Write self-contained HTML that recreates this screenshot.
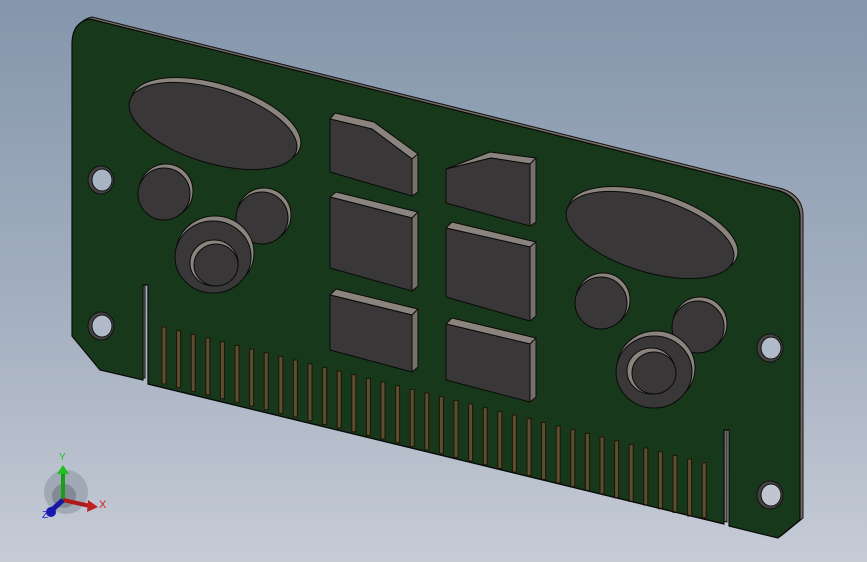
<!DOCTYPE html>
<html><head><meta charset="utf-8"><style>
html,body{margin:0;padding:0;width:867px;height:562px;overflow:hidden}
svg{display:block}
text{font-family:"Liberation Sans",sans-serif}
</style></head><body>
<svg width="867" height="562" viewBox="0 0 867 562" xmlns="http://www.w3.org/2000/svg">
<defs>
<linearGradient id="bg" x1="0" y1="0" x2="0" y2="1">
<stop offset="0" stop-color="#8496ac"/><stop offset="0.6" stop-color="#a7b2c2"/><stop offset="1" stop-color="#c6ccd6"/>
</linearGradient>
</defs>
<rect width="867" height="562" fill="url(#bg)"/>
<!-- board edge (thickness) -->
<path d="M92,17 L783,189 Q802,196 803,214 L803,518 L781,536 L732,524 L732,430 L727,430 L727,522 L150,382 L150,285 L145,285 L145,378 L103,368 L75,335 L75,40 Q76,20 92,17 Z" fill="#777068" stroke="#111" stroke-width="1"/>
<!-- board face -->
<path d="M90,19 L780,191 Q799,198 800,216 L800,520 L778,538 L729,526 L729,430 L724,430 L724,524 L148,384 L148,285 L143,285 L143,380 L100,370 L72,336 L72,42 Q73,22 90,19 Z" fill="#18381b" stroke="#0a0a0a" stroke-width="1.2"/>
<!-- teeth -->
<g fill="#5e4e30" stroke="#1a1408" stroke-width="1">
<script>/*placeholder*/</script>
<rect x="162" y="327" width="4" height="57"/><rect x="176.6" y="330.7" width="4" height="57"/><rect x="191.2" y="334.4" width="4" height="57"/><rect x="205.8" y="338" width="4" height="57"/><rect x="220.4" y="341.7" width="4" height="57"/><rect x="235" y="345.4" width="4" height="57"/><rect x="249.6" y="349" width="4" height="57"/><rect x="264.2" y="352.7" width="4" height="57"/><rect x="278.8" y="356.4" width="4" height="57"/><rect x="293.4" y="360" width="4" height="57"/><rect x="308" y="363.7" width="4" height="57"/><rect x="322.6" y="367.4" width="4" height="57"/><rect x="337.2" y="371" width="4" height="57"/><rect x="351.8" y="374.7" width="4" height="57"/><rect x="366.4" y="378.4" width="4" height="57"/><rect x="381" y="382" width="4" height="57"/><rect x="395.6" y="385.7" width="4" height="57"/><rect x="410.2" y="389.4" width="4" height="57"/><rect x="424.8" y="393" width="4" height="57"/><rect x="439.4" y="396.7" width="4" height="57"/><rect x="454" y="400.4" width="4" height="57"/><rect x="468.6" y="404" width="4" height="57"/><rect x="483.2" y="407.7" width="4" height="57"/><rect x="497.8" y="411.4" width="4" height="57"/><rect x="512.4" y="415" width="4" height="57"/><rect x="527" y="418.7" width="4" height="57"/><rect x="541.6" y="422.4" width="4" height="57"/><rect x="556.2" y="426" width="4" height="57"/><rect x="570.8" y="429.7" width="4" height="57"/><rect x="585.4" y="433.4" width="4" height="57"/><rect x="600" y="437" width="4" height="57"/><rect x="614.6" y="440.7" width="4" height="57"/><rect x="629.2" y="444.4" width="4" height="57"/><rect x="643.8" y="448" width="4" height="57"/><rect x="658.4" y="451.7" width="4" height="57"/><rect x="673" y="455.4" width="4" height="57"/><rect x="687.6" y="459" width="4" height="57"/><rect x="702.2" y="462.7" width="4" height="55"/>
</g>
<!-- redraw board bottom edge over teeth bottoms -->
<path d="M148,384 L724,524" stroke="#0a0a0a" stroke-width="1.2"/>
<!-- holes -->
<g stroke="#111" stroke-width="1">
<ellipse cx="101" cy="180" rx="13" ry="14" fill="#444"/><ellipse cx="102" cy="180" rx="10" ry="11" fill="#a8b4c4"/>
<ellipse cx="101" cy="326" rx="13" ry="14" fill="#444"/><ellipse cx="102" cy="326" rx="10" ry="11" fill="#b0bac8"/>
<ellipse cx="770" cy="348" rx="13" ry="14" fill="#444"/><ellipse cx="771" cy="348" rx="10" ry="11" fill="#b0bac8"/>
<ellipse cx="770" cy="495" rx="13" ry="14" fill="#444"/><ellipse cx="771" cy="495" rx="10" ry="11" fill="#c0c6d0"/>
</g>
<!-- round components -->
<g stroke="#0a0a0a" stroke-width="1">
<ellipse cx="216" cy="122" rx="88" ry="38" transform="rotate(17 216 122)" fill="#8b837d"/>
<ellipse cx="213" cy="126" rx="87" ry="37" transform="rotate(17 213 126)" fill="#393737"/>
<ellipse cx="653" cy="231" rx="88" ry="38" transform="rotate(17 653 231)" fill="#8b837d"/>
<ellipse cx="650" cy="235" rx="87" ry="37" transform="rotate(17 650 235)" fill="#393737"/>
<ellipse cx="166" cy="191" rx="27" ry="27" fill="#8b837d"/><ellipse cx="164" cy="194" rx="26" ry="26" fill="#393737"/>
<ellipse cx="264" cy="215" rx="27" ry="27" fill="#8b837d"/><ellipse cx="262" cy="218" rx="26" ry="26" fill="#393737"/>
<ellipse cx="603" cy="300" rx="27" ry="27" fill="#8b837d"/><ellipse cx="601" cy="303" rx="26" ry="26" fill="#393737"/>
<ellipse cx="700" cy="324" rx="27" ry="27" fill="#8b837d"/><ellipse cx="698" cy="327" rx="26" ry="26" fill="#393737"/>
<ellipse cx="215" cy="253" rx="39" ry="37" fill="#8b837d"/><ellipse cx="213" cy="257" rx="38" ry="36" fill="#393737"/>
<ellipse cx="214" cy="263" rx="24" ry="23" fill="#8b837d"/><ellipse cx="216" cy="265" rx="22" ry="21" fill="#393737"/>
<ellipse cx="656" cy="368" rx="39" ry="37" fill="#8b837d"/><ellipse cx="654" cy="372" rx="38" ry="36" fill="#393737"/>
<ellipse cx="651" cy="371" rx="24" ry="23" fill="#8b837d"/><ellipse cx="654" cy="373" rx="22" ry="21" fill="#393737"/>
</g>
<!-- chips -->
<g stroke="#0a0a0a" stroke-width="1" stroke-linejoin="round">
<path d="M330,119 L335,113 L374,122 L418,154 L412,159 L372,129 Z" fill="#8b837d"/>
<path d="M412,159 L418,154 L418,192 L412,196 Z" fill="#77706a"/>
<path d="M330,119 L372,129 L412,159 L412,196 L330,172 Z" fill="#393737"/>
<path d="M330,197 L336,192 L418,212 L412,218 Z" fill="#8b837d"/>
<path d="M412,218 L418,212 L418,286 L412,291 Z" fill="#77706a"/>
<path d="M330,197 L412,218 L412,291 L330,268 Z" fill="#393737"/>
<path d="M330,295 L336,289 L418,309 L412,315 Z" fill="#8b837d"/>
<path d="M412,315 L418,309 L418,367 L412,372 Z" fill="#77706a"/>
<path d="M330,295 L412,315 L412,372 L330,350 Z" fill="#393737"/>
<path d="M446,169 L490,152 L536,158 L530,164 L491,158 Z" fill="#8b837d"/>
<path d="M530,164 L536,158 L536,222 L530,226 Z" fill="#77706a"/>
<path d="M446,169 L491,158 L530,164 L530,226 L446,203 Z" fill="#393737"/>
<path d="M446,228 L452,222 L536,242 L530,247 Z" fill="#8b837d"/>
<path d="M530,247 L536,242 L536,316 L530,321 Z" fill="#77706a"/>
<path d="M446,228 L530,247 L530,321 L446,297 Z" fill="#393737"/>
<path d="M446,324 L452,318 L536,338 L530,344 Z" fill="#8b837d"/>
<path d="M530,344 L536,338 L536,397 L530,402 Z" fill="#77706a"/>
<path d="M446,324 L530,344 L530,402 L446,380 Z" fill="#393737"/>
</g>
<!-- axis triad -->
<g>
<circle cx="66" cy="492" r="22" fill="#9aa2ae" opacity="0.8"/>
<circle cx="64" cy="496" r="12" fill="#7a828e" opacity="0.8"/>
<line x1="63" y1="500" x2="63" y2="472" stroke="#17a017" stroke-width="4"/>
<path d="M57,474 L63,465 L69,474 Z" fill="#22c022"/>
<line x1="63" y1="500" x2="90" y2="506" stroke="#b01818" stroke-width="4"/>
<path d="M88,500 L98,507 L87,512 Z" fill="#c02020"/>
<line x1="63" y1="500" x2="52" y2="510" stroke="#1818a0" stroke-width="5"/>
<circle cx="51" cy="512" r="5" fill="#1818b0"/>
<text x="59" y="460" font-size="10" fill="#22c022">Y</text>
<text x="99" y="508" font-size="11" fill="#d02020">X</text>
<text x="42" y="518" font-size="10" fill="#2020d0">Z</text>
</g>
</svg>
</body></html>
